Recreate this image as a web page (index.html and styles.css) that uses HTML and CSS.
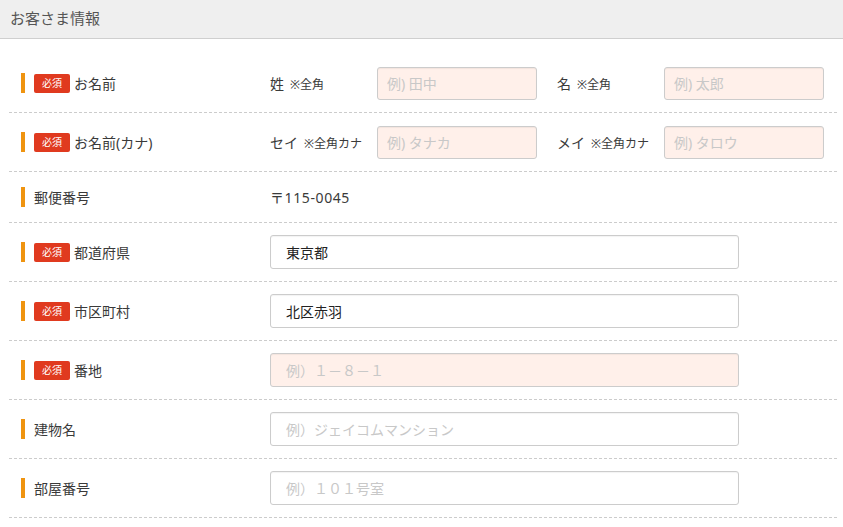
FILE: index.html
```html
<!DOCTYPE html>
<html lang="ja">
<head>
<meta charset="utf-8">
<link rel="stylesheet" href="styles.css">
</head>
<body>
<div class="panel">
  <div class="panel-head">お客さま情報</div>
  <div class="rows">
    <div class="row">
      <div class="label"><span class="bar"></span><span class="req">必須</span>お名前</div>
      <div class="field split">
        <div class="half"><span class="sub">姓<small>※全角</small></span><input class="inp short need" placeholder="例) 田中"></div>
        <div class="half"><span class="sub">名<small>※全角</small></span><input class="inp short need" placeholder="例) 太郎"></div>
      </div>
    </div>
    <div class="row">
      <div class="label"><span class="bar"></span><span class="req">必須</span>お名前(カナ)</div>
      <div class="field split">
        <div class="half"><span class="sub">セイ<small>※全角カナ</small></span><input class="inp short need" placeholder="例) タナカ"></div>
        <div class="half"><span class="sub">メイ<small>※全角カナ</small></span><input class="inp short need" placeholder="例) タロウ"></div>
      </div>
    </div>
    <div class="row low">
      <div class="label"><span class="bar"></span>郵便番号</div>
      <div class="field"><span class="zip">〒115-0045</span></div>
    </div>
    <div class="row">
      <div class="label"><span class="bar"></span><span class="req">必須</span>都道府県</div>
      <div class="field"><input class="inp wide" value="東京都"></div>
    </div>
    <div class="row">
      <div class="label"><span class="bar"></span><span class="req">必須</span>市区町村</div>
      <div class="field"><input class="inp wide" value="北区赤羽"></div>
    </div>
    <div class="row">
      <div class="label"><span class="bar"></span><span class="req">必須</span>番地</div>
      <div class="field"><input class="inp wide need" placeholder="例）１－８－１"></div>
    </div>
    <div class="row">
      <div class="label"><span class="bar"></span>建物名</div>
      <div class="field"><input class="inp wide" placeholder="例）ジェイコムマンション"></div>
    </div>
    <div class="row">
      <div class="label"><span class="bar"></span>部屋番号</div>
      <div class="field"><input class="inp wide" placeholder="例）１０１号室"></div>
    </div>
  </div>
</div>
</body>
</html>
```
FILE: styles.css
```css
* { box-sizing: border-box; }
html, body { margin: 0; padding: 0; background: #fff; }
body {
  font-family: "Noto Sans", "Noto Sans CJK JP", "Liberation Sans", sans-serif;
  color: #3a3a3a;
  font-size: 14px;
}
.panel-head {
  height: 39px;
  background: #efefef;
  border-bottom: 1px solid #cfcfcf;
  padding: 0 10px;
  font-size: 15px;
  line-height: 37px;
  color: #555;
}
.rows {
  margin: 15px 6px 0 9px;
}
.row {
  display: flex;
  align-items: center;
  height: 59px;
  border-bottom: 1px dashed #ccc;
}
.row.low { height: 51px; }
.label {
  width: 261px;
  flex: none;
  display: flex;
  align-items: center;
  padding-left: 12px;
  font-size: 14px;
  color: #3a3a3a;
}
.bar {
  display: inline-block;
  width: 4px;
  height: 20px;
  background: #ef9410;
  margin-right: 9px;
}
.req {
  display: inline-block;
  width: 36px;
  height: 19px;
  line-height: 19px;
  text-align: center;
  background: #e03a1f;
  color: #fff;
  font-size: 10px;
  border-radius: 2px;
  margin-right: 4px;
}
.field { display: flex; align-items: center; }
.split { gap: 20px; }
.half { display: flex; align-items: center; }
.sub {
  width: 107px;
  font-size: 14px;
  color: #3a3a3a;
}
.sub small { font-size: 12px; margin-left: 6px; }
.inp {
  font-family: inherit;
  font-size: 14px;
  color: #222;
  border: 1px solid #ccc;
  border-radius: 3px;
  background: #fff;
  box-shadow: inset 0 1px 1px rgba(0,0,0,0.05);
  outline: none;
}
.inp::placeholder { color: #c8c8c8; }
.inp.need { background: #fff0ea; }
.short { width: 160px; height: 33px; padding: 0 9px; }
.wide { width: 469px; height: 34px; padding: 0 15px; }
.zip { font-size: 14px; color: #3a3a3a; letter-spacing: 0.6px; }
```
